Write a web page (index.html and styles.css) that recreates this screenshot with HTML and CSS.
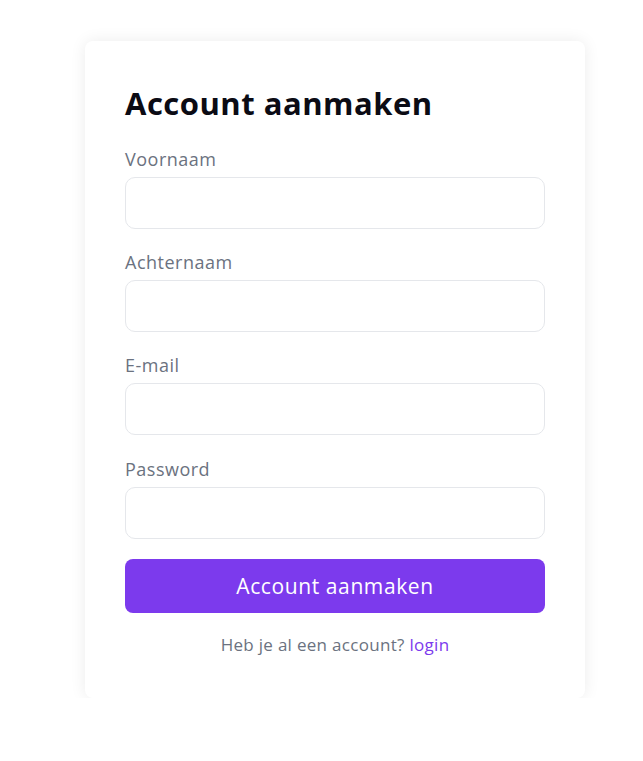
FILE: index.html
```html
<!DOCTYPE html>
<html lang="nl">
<head>
<meta charset="utf-8">
<title>Account aanmaken</title>
<link rel="stylesheet" href="styles.css">
</head>
<body>
<main class="page">
  <form class="card">
    <h1 class="title">Account aanmaken</h1>
    <div class="field">
      <label class="label" for="fn">Voornaam</label>
      <input class="input" id="fn" type="text">
    </div>
    <div class="field">
      <label class="label" for="ln">Achternaam</label>
      <input class="input" id="ln" type="text">
    </div>
    <div class="field">
      <label class="label" for="em">E-mail</label>
      <input class="input" id="em" type="email">
    </div>
    <div class="field field-last">
      <label class="label" for="pw">Password</label>
      <input class="input" id="pw" type="password">
    </div>
    <button class="btn" type="button">Account aanmaken</button>
    <p class="footer">Heb je al een account? <a class="link" href="#">login</a></p>
  </form>
</main>
</body>
</html>
```
FILE: styles.css
```css
* { box-sizing: border-box; }
html, body { margin: 0; padding: 0; background: #fff; }
body { font-family: "Open Sans", "Noto Sans", sans-serif; }
.page { padding: 41px 0 0 85px; }
.card {
  width: 500px;
  background: #fff;
  border-radius: 8px;
  box-shadow: 0 0 16px rgba(0,0,0,0.08);
  padding: 40px 40px 41px;
  display: flex;
  flex-direction: column;
}
.title {
  margin: 0 0 20px;
  font-size: 31px;
  line-height: 45px;
  font-weight: 700;
  color: #0b0b14;
  letter-spacing: 0.5px;
}
.field { display: flex; flex-direction: column; margin-bottom: 20px; }
.field-last { margin-top: 1px; margin-bottom: 20px; }
.label {
  font-size: 18px;
  line-height: 26px;
  color: #6b7280;
  margin-bottom: 5px;
  letter-spacing: 0.5px;
}
.input {
  height: 52px;
  border: 1px solid #e5e7eb;
  border-radius: 10px;
  background: #fff;
  outline: none;
  font: inherit;
}
.btn {
  margin: 0;
  height: 54px;
  border: 0;
  border-radius: 8px;
  background: #7c3aed;
  color: #fff;
  font-family: inherit;
  font-size: 21px;
  letter-spacing: 0.6px;
}
.footer {
  margin: 20px 0 0;
  text-align: center;
  font-size: 17px;
  line-height: 24px;
  color: #6b7280;
  letter-spacing: 0.3px;
}
.link { color: #7c3aed; text-decoration: none; }
```
